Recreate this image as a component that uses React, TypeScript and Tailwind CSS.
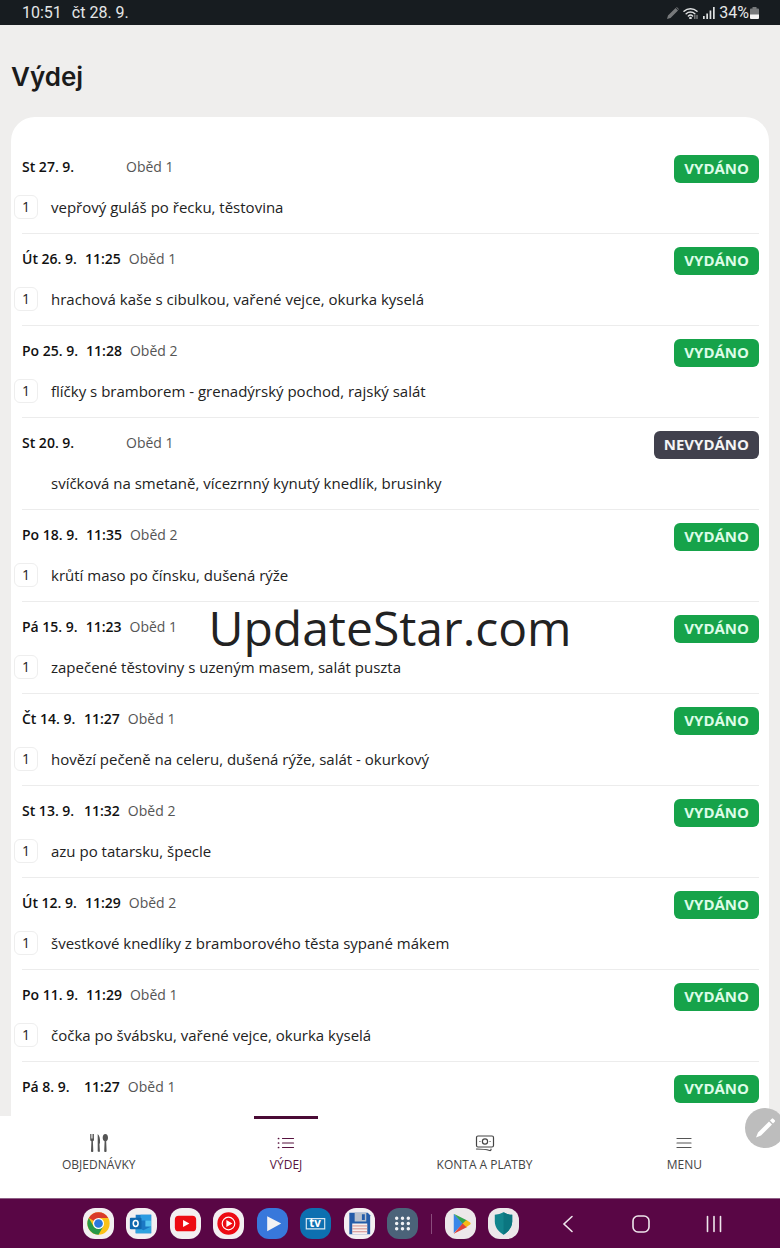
import React from 'react';

type Order = {
  date: string;
  time?: string;
  meal: string;
  food?: string;
  served: boolean;
};

const orders: Order[] = [
  { date: 'St 27. 9.', meal: 'Oběd 1', food: 'vepřový guláš po řecku, těstovina', served: true },
  { date: 'Út 26. 9.', time: '11:25', meal: 'Oběd 1', food: 'hrachová kaše s cibulkou, vařené vejce, okurka kyselá', served: true },
  { date: 'Po 25. 9.', time: '11:28', meal: 'Oběd 2', food: 'flíčky s bramborem - grenadýrský pochod, rajský salát', served: true },
  { date: 'St 20. 9.', meal: 'Oběd 1', food: 'svíčková na smetaně, vícezrnný kynutý knedlík, brusinky', served: false },
  { date: 'Po 18. 9.', time: '11:35', meal: 'Oběd 2', food: 'krůtí maso po čínsku, dušená rýže', served: true },
  { date: 'Pá 15. 9.', time: '11:23', meal: 'Oběd 1', food: 'zapečené těstoviny s uzeným masem, salát puszta', served: true },
  { date: 'Čt 14. 9.', time: '11:27', meal: 'Oběd 1', food: 'hovězí pečeně na celeru, dušená rýže, salát - okurkový', served: true },
  { date: 'St 13. 9.', time: '11:32', meal: 'Oběd 2', food: 'azu po tatarsku, špecle', served: true },
  { date: 'Út 12. 9.', time: '11:29', meal: 'Oběd 2', food: 'švestkové knedlíky z bramborového těsta sypané mákem', served: true },
  { date: 'Po 11. 9.', time: '11:29', meal: 'Oběd 1', food: 'čočka po švábsku, vařené vejce, okurka kyselá', served: true },
  { date: 'Pá 8. 9.', time: '11:27', meal: 'Oběd 1', served: true },
];

const StatusBar: React.FC = () => (
  <div className="h-[25px] shrink-0 bg-[#171c20] text-[#e4e6e7] pl-[22px] pr-[21px] flex items-center justify-between text-base leading-6 font-['Roboto',sans-serif]">
    <div className="flex gap-[10px]">
      <span>10:51</span>
      <span>čt 28. 9.</span>
    </div>
    <div className="flex items-center gap-1">
      <svg className="w-3 h-3" viewBox="0 0 12 12" fill="#77797b">
        <path d="M0 12l1-3.500L8.600 1l2.400 2.400L3.500 11zM9.200.4l.6-.4L12 2.200l-.6.6z" />
      </svg>
      <svg className="w-4 h-3" viewBox="0 0 16 12" fill="none" stroke="#dfe1e2" strokeWidth="1.500" strokeLinecap="round">
        <path d="M1 4.200a9.500 9.500 0 0 1 13 0M3.200 6.700a6.300 6.300 0 0 1 8.600 0M5.400 9a3.200 3.200 0 0 1 4.200 0" />
        <circle cx="7.500" cy="11" r=".6" fill="#dfe1e2" />
        <path d="M11.800 8.500v3m2.200-3v3" stroke="#77797b" />
      </svg>
      <svg className="w-3 h-3" viewBox="0 0 12 12" fill="#dfe1e2">
        <path d="M0 9h1.700v3H0zM3.300 6.500H5V12H3.300zM6.600 3.500h1.700V12H6.600zM10 0h1.700v12H10z" />
      </svg>
      <span className="flex items-center gap-px">
        34%
        <svg className="w-[9px] h-3" viewBox="0 0 9 12">
          <path d="M2.500 0h4v1.500H8a1 1 0 0 1 1 1V8H0V2.500a1 1 0 0 1 1-1h1.500z" fill="#77797b" />
          <path d="M0 7.500h9V11a1 1 0 0 1-1 1H1a1 1 0 0 1-1-1z" fill="#f4f4f4" />
        </svg>
      </span>
    </div>
  </div>
);

const OrderRow: React.FC<{ order: Order }> = ({ order }) => (
  <li className="h-[92px] border-b border-[#ececec] pt-[13px] text-[15px] leading-5">
    <div className="flex justify-between items-start">
      <div className="flex gap-2 pt-0.5 text-sm">
        <span className="min-w-[54px] font-semibold text-[#111111]">{order.date}</span>
        <span className="min-w-[34px] font-semibold text-[#111111]">{order.time}</span>
        <span className="text-[#555555]">{order.meal}</span>
      </div>
      <span
        className={`h-7 px-[10px] pb-0.5 rounded-md flex items-center font-bold ${
          order.served ? 'bg-[#16a34a] text-[#dcfce7]' : 'bg-[#41414d] text-[#f4f4f5]'
        }`}
      >
        {order.served ? 'VYDÁNO' : 'NEVYDÁNO'}
      </span>
    </div>
    {order.food && (
      <div className="-ml-2 mt-3 flex items-center gap-[13px] text-[#222222]">
        <span
          className={`size-6 shrink-0 rounded-md flex items-center justify-center text-sm ${
            order.served ? 'border border-[#eeeeee]' : ''
          }`}
        >
          {order.served && '1'}
        </span>
        <span>{order.food}</span>
      </div>
    )}
  </li>
);

const tabs = [
  {
    label: 'OBJEDNÁVKY',
    icon: (
      <svg className="w-5 h-5" viewBox="0 0 20 20" fill="#555555">
        <path d="M1.200 1h.9v4.500h.6V1h.8v4.500h.6V1H5v5.500c0 1-.5 1.500-1.100 1.700l.4 9.800c0 .6-.4 1-1.100 1s-1.200-.4-1.200-1l.4-9.800c-.7-.2-1.200-.7-1.200-1.700z" />
        <path d="M8.700 1c1.900 1.500 2.600 5 2.300 9l-.5.900.4 7.300c0 .5-.4.8-1 .8s-1.200-.3-1.200-.9z" />
        <path d="M16.300 1c1.700 0 2.700 1.500 2.700 3.700 0 1.700-.7 3-1.800 3.500l.4 9.800c0 .6-.5 1-1.200 1s-1.200-.4-1.200-1l.4-9.800c-1.200-.5-1.900-1.800-1.900-3.500C13.700 2.500 14.700 1 16.300 1z" />
      </svg>
    ),
  },
  {
    label: 'VÝDEJ',
    active: true,
    icon: (
      <svg className="w-5 h-5" viewBox="0 0 20 20" fill="none" stroke="#57123f" strokeWidth="1.200" strokeLinecap="round">
        <path d="M6.500 5.500h11M6.500 10h11M6.500 14.500h11" />
        <path d="M2.500 5.500h.1M2.500 10h.1M2.500 14.500h.1" strokeWidth="1.700" />
      </svg>
    ),
  },
  {
    label: 'KONTA A PLATBY',
    icon: (
      <svg className="w-5 h-5" viewBox="0 0 20 20" fill="none" stroke="#444444" strokeWidth="1.200" strokeLinecap="round" strokeLinejoin="round">
        <rect x="1.500" y="3" width="17" height="11" rx="1.500" />
        <circle cx="10" cy="8.500" r="2.600" />
        <path d="M4.900 8.500h.1M15 8.500h.1M1.500 16c5 0 9.500.4 13.200 1.500.8.200 1.300-.2 1.300-1v-.5" />
      </svg>
    ),
  },
  {
    label: 'MENU',
    icon: (
      <svg className="w-5 h-5" viewBox="0 0 20 20" fill="none" stroke="#555555" strokeWidth="1.200" strokeLinecap="round">
        <path d="M3 5.500h14M3 10h14M3 14.500h14" />
      </svg>
    ),
  },
];

const apps = [
  {
    name: 'Chrome',
    tile: 'bg-[#f3eff1]',
    art: (
      <>
        <circle cx="16" cy="16" r="11.500" fill="#fbc116" />
        <path d="M16 16L6 10.300A11.500 11.500 0 0 1 26 10.300H16z" fill="#d93a2b" />
        <path d="M6 10.300A11.500 11.500 0 0 0 16 27.500l5-8.600L16 16l-5 3z" fill="#279847" />
        <circle cx="16" cy="16" r="5.700" fill="#fff" />
        <circle cx="16" cy="16" r="4.500" fill="#2a78dc" />
      </>
    ),
  },
  {
    name: 'Outlook',
    tile: 'bg-[#f3eff1]',
    art: (
      <>
        <path d="M10 7h16v19H10z" fill="#1b78c4" />
        <path d="M15 7h11v6H15z" fill="#2c9be2" />
        <path d="M20 13h6v6h-6z" fill="#54c3ef" />
        <path d="M10 19l8 4 8-4v7H10z" fill="#2ea2df" />
        <rect x="4" y="10" width="12" height="12" rx="1" fill="#1067ae" />
        <ellipse cx="10" cy="16" rx="2.500" ry="3" fill="none" stroke="#fff" strokeWidth="1.600" />
      </>
    ),
  },
  {
    name: 'YouTube',
    tile: 'bg-[#f3eff1]',
    art: (
      <>
        <rect x="5" y="8" width="22" height="16" rx="4" fill="#ed0b13" />
        <path d="M13.500 12.500l6.500 3.500-6.500 3.500z" fill="#fff" />
      </>
    ),
  },
  {
    name: 'YouTube Music',
    tile: 'bg-[#f3eff1]',
    art: (
      <>
        <circle cx="16" cy="16" r="11.500" fill="#ed0b13" />
        <circle cx="16" cy="16" r="6.500" fill="none" stroke="#fff" strokeWidth="1.200" />
        <path d="M13.800 12.300l6.200 3.700-6.200 3.700z" fill="#fff" />
      </>
    ),
  },
  {
    name: 'Přehrávač',
    tile: 'bg-[#3878db]',
    art: <path d="M10.500 8.500L25 16l-14.500 8z" fill="#f2f2f4" />,
  },
  {
    name: 'TV',
    tile: 'bg-[#0d70b0]',
    art: (
      <>
        <path d="M9 11H6.500v10.500h19V11H9" fill="none" stroke="#d8e8f2" strokeWidth="1.200" />
        <text x="15.500" y="20" textAnchor="middle" fontSize="12" fontWeight="700" fontFamily="Open Sans" fill="#fff">tv</text>
      </>
    ),
  },
  {
    name: 'Soubory',
    tile: 'bg-[#f3eff1]',
    art: (
      <>
        <path d="M5.500 5h19L27 7.500V27H5.500z" fill="#245ca9" />
        <path d="M11 5h12v9H11z" fill="#b9c1cd" />
        <path d="M18.500 6.500h3v6h-3z" fill="#245ca9" />
        <path d="M8.500 16H24v11H8.500z" fill="#f7efee" />
        <path d="M8.500 18.500H24M8.500 21.500H24M8.500 24.500H24" stroke="#d28a88" strokeWidth="1" />
      </>
    ),
  },
  {
    name: 'Aplikace',
    tile: 'bg-[#4b6379]',
    art: (
      <path
        d="M10 10.500h.01M16 10.500h.01M22 10.500h.01M10 16h.01M16 16h.01M22 16h.01M10 21.500h.01M16 21.500h.01M22 21.500h.01"
        stroke="#f0f2f5"
        strokeWidth="3.600"
        strokeLinecap="round"
      />
    ),
  },
];

const recent = [
  {
    name: 'Obchod Play',
    tile: 'bg-[#ece8ea]',
    art: (
      <>
        <path d="M9 6v20l9.500-10z" fill="#3a86e8" />
        <path d="M9 6l14 7-4.500 3.500z" fill="#35a350" />
        <path d="M9 26.500l14-7-4.500-4z" fill="#df4339" />
        <path d="M22 12.300l4 2.700q1 1 0 2l-4 2.700-3.800-3.700z" fill="#f7b916" />
      </>
    ),
  },
  {
    name: 'Adguard',
    tile: 'bg-[#ece8ea]',
    art: (
      <>
        <path d="M7 7q5 0 9-2.500Q20 7 25 7v7c0 6-4 10.500-9 13.500C11 24.500 7 20 7 14z" fill="#12858d" />
        <path d="M16 4.500Q20 7 25 7v7c0 6-4 10.500-9 13.500z" fill="#0b7680" />
      </>
    ),
  },
];

const AppIcon: React.FC<{ app: (typeof apps)[number] }> = ({ app }) => (
  <button aria-label={app.name} className={`size-[31px] shrink-0 rounded-xl overflow-hidden ${app.tile}`}>
    <svg className="w-full h-full" viewBox="0 0 32 32">
      {app.art}
    </svg>
  </button>
);

const TaskBar: React.FC = () => (
  <div className="h-[50px] shrink-0 bg-[#590645] border-t border-[#8d6085] pl-[83px] pr-14 flex items-center justify-between">
    <div className="flex items-center gap-[13px]">
      <div className="w-[335px] flex justify-between">
        {apps.map((app) => (
          <AppIcon key={app.name} app={app} />
        ))}
      </div>
      <span className="w-px h-5 bg-[#8a4c7c]"></span>
      <div className="flex gap-3">
        {recent.map((app) => (
          <AppIcon key={app.name} app={app} />
        ))}
      </div>
    </div>
    <div className="flex gap-[53px]">
      <button aria-label="Zpět">
        <svg className="w-5 h-5" viewBox="0 0 20 20" fill="none" stroke="#eee6ec" strokeWidth="1.600" strokeLinecap="round">
          <path d="M14 2.500L6 10l8 7.500" />
        </svg>
      </button>
      <button aria-label="Domů">
        <svg className="w-5 h-5" viewBox="0 0 20 20" fill="none" stroke="#eee6ec" strokeWidth="1.600">
          <rect x="2" y="2" width="16" height="16" rx="5" />
        </svg>
      </button>
      <button aria-label="Poslední">
        <svg className="w-5 h-5" viewBox="0 0 20 20" fill="none" stroke="#eee6ec" strokeWidth="1.600" strokeLinecap="round">
          <path d="M3.500 2.500v15M10 2.500v15M16.500 2.500v15" />
        </svg>
      </button>
    </div>
  </div>
);

const App: React.FC = () => {
  return (
    <div className="relative h-screen flex flex-col overflow-hidden bg-[#efeeed] font-['Open_Sans',sans-serif]">
      <StatusBar />

      <main className="flex-1 min-h-0 overflow-hidden px-[11px]">
        <h1 className="h-[92px] flex items-center pt-3 text-[26px] leading-8 font-semibold text-[#1b1b1b] font-['Inter',sans-serif]">
          Výdej
        </h1>
        <ul className="bg-white rounded-t-3xl pt-[25px] pl-[11px] pr-[10px]">
          {orders.map((order) => (
            <OrderRow key={order.date} order={order} />
          ))}
        </ul>
      </main>

      <nav className="relative h-[82px] shrink-0 bg-white pl-[46px] pr-[62px] flex justify-between">
        {tabs.map((tab) => (
          <a
            key={tab.label}
            href="#"
            className={`px-4 pt-[14px] border-t-3 flex flex-col items-center gap-0.5 text-xs leading-5 ${
              tab.active ? 'border-[#4a0b35] text-[#57123f]' : 'border-transparent text-[#444444]'
            }`}
          >
            {tab.icon}
            {tab.label}
          </a>
        ))}
        <button
          aria-label="Pero"
          className="absolute -right-[5px] -top-2 size-10 rounded-full bg-[#bdbdbd] flex items-center justify-center"
        >
          <svg className="w-6 h-6" viewBox="0 0 24 24" fill="#ffffff">
            <path d="M3 21.500l2-5L16 5.500l3 3L8 19.500zM17 4.500l1.800-1.800q.7-.7 1.400 0l1.600 1.600q.6.700 0 1.400L20 7.500z" />
          </svg>
        </button>
      </nav>

      <TaskBar />

      <p className="absolute inset-x-0 top-1/2 -translate-y-1/2 pt-2 text-center text-5xl leading-[64px] text-[#222222] pointer-events-none">
        UpdateStar.com
      </p>
    </div>
  );
};

export default App;
